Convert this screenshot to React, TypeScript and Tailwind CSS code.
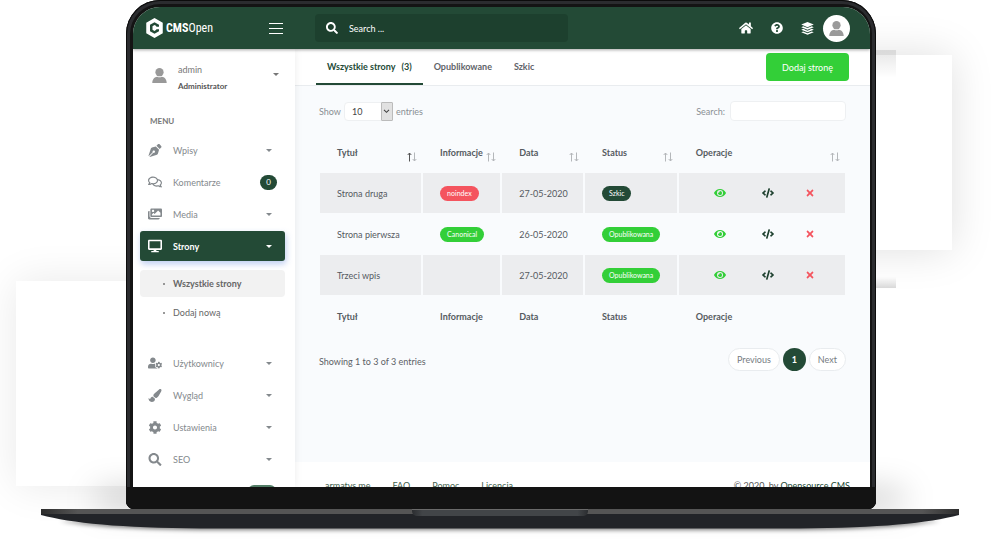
import type { ReactNode } from "react";
import {
  FaCode,
  FaCog,
  FaDesktop,
  FaEye,
  FaHome,
  FaImages,
  FaPaintBrush,
  FaPenNib,
  FaQuestionCircle,
  FaRegComments,
  FaSearch,
  FaTimes,
  FaUserCog,
} from "react-icons/fa";

function Caret() {
  return (
    <svg viewBox="0 0 8 4" className="h-[3px] w-[6px] shrink-0" aria-hidden="true">
      <path d="M0 0h8L4 4z" fill="currentColor" />
    </svg>
  );
}

function Person({ className }: { className: string }) {
  return (
    <svg viewBox="0 0 16 16" className={className} aria-hidden="true">
      <circle cx="8" cy="4.5" r="4.4" fill="currentColor" />
      <path d="M.3 16c0-4.400 2.500-6.400 5.200-6.800 1.500.9 3.500.9 5 0 2.700.4 5.200 2.400 5.200 6.800z" fill="currentColor" />
    </svg>
  );
}

function Layers() {
  return (
    <svg viewBox="0 0 26 26" className="h-[13px] w-[13px]" fill="currentColor" aria-hidden="true">
      <path d="M13 0 25.500 5.200 13 10.400.5 5.200z" />
      <path d="M4.500 8.600 13 12.200l8.500-3.600 4 1.700L13 15.500.5 10.300z" />
      <path d="M4.500 13.700 13 17.300l8.500-3.600 4 1.700L13 20.600.5 15.400z" />
      <path d="M4.500 18.800 13 22.400l8.500-3.600 4 1.700L13 25.700.5 20.500z" />
    </svg>
  );
}

function Logo() {
  return (
    <a href="#home" className="flex items-center gap-[3px] text-white" aria-label="CMSOpen">
      <svg viewBox="0 0 34 40" className="h-5 w-[17px]" aria-hidden="true">
        <path
          fillRule="evenodd"
          fill="currentColor"
          d="M17 0 33.500 9.500v21L17 40 .5 30.500v-21zM17 8.500 8 13.700v12.600l9 5.200 9-5.200v-3.800h-5.500v1.200L17 25.800l-4-2.300v-7l4-2.300 3.500 2v1.300H26v-3.800z"
        />
      </svg>
      <span className="flex font-['Roboto_Condensed','Roboto',sans-serif] text-[12px] leading-5">
        <span className="font-bold">CMS</span>
        <span>Open</span>
      </span>
    </a>
  );
}

function Header() {
  return (
    <header className="relative z-10 flex h-[42px] shrink-0 items-center bg-[#234a36] pr-5 pl-[13px] text-white shadow-[0_1px_3px_rgba(0,0,0,0.35)]">
      <div className="flex w-[169px] shrink-0 items-center justify-between pr-8">
        <Logo />
        <button type="button" aria-label="Toggle menu" className="flex w-3.5 flex-col gap-1">
          <span className="h-px bg-white" />
          <span className="h-px bg-white" />
          <span className="h-px bg-white" />
        </button>
      </div>
      <label className="flex h-7 w-[253px] items-center gap-[11px] rounded-sm bg-[#1d402e] px-[11px]">
        <FaSearch className="h-3 w-3 shrink-0" />
        <input
          type="search"
          aria-label="Search"
          placeholder="Search ..."
          className="min-w-0 flex-1 bg-transparent text-[9px] text-white outline-none placeholder:text-white"
        />
      </label>
      <nav className="ml-auto flex items-center gap-[18px]" aria-label="Shortcuts">
        <a href="#home" aria-label="Home"><FaHome className="h-3.5 w-3.5" /></a>
        <a href="#help" aria-label="Help"><FaQuestionCircle className="h-3 w-3" /></a>
        <a href="#layers" aria-label="Layers"><Layers /></a>
      </nav>
      <button type="button" aria-label="Account" className="ml-[9px] flex h-[27px] w-[27px] items-center justify-center rounded-full bg-white text-[#9a9a9a]">
        <Person className="h-[15px] w-[15px]" />
      </button>
    </header>
  );
}

function MenuItem({ icon, label, badge, active }: { icon: ReactNode; label: string; badge?: string; active?: boolean }) {
  return (
    <a
      href={"#" + label}
      className={
        active
          ? "flex h-[30px] items-center rounded-[3px] bg-[#234a36] px-2 font-bold text-white shadow-[1px_3px_6px_rgba(90,130,220,0.4)]"
          : "flex h-[30px] items-center px-2 text-[#84898d]"
      }
    >
      <span className="flex w-[25px] shrink-0">{icon}</span>
      <span className="flex-1">{label}</span>
      {badge ? (
        <span className="flex h-[15px] w-[17px] items-center justify-center rounded-full bg-[#234a36] text-[8px] text-white">{badge}</span>
      ) : (
        <span className="pr-[5px]"><Caret /></span>
      )}
    </a>
  );
}

function Sidebar() {
  return (
    <aside className="relative z-[5] w-[162px] shrink-0 overflow-hidden bg-white pr-[10px] pl-[7px] shadow-[0_0_8px_rgba(0,0,0,0.08)]">
      <div className="flex h-[56px] items-start pt-[13px] pr-[6px] pl-3">
        <Person className="mt-1.5 h-[15px] w-[15px] text-[#999]" />
        <div className="ml-[11px] flex-1">
          <div className="leading-4 text-[#777]">admin</div>
          <div className="text-[8px] leading-4 font-bold text-[#555]">Administrator</div>
        </div>
        <span className="mt-[11px] text-[#777]"><Caret /></span>
      </div>
      <h2 className="px-[10px] pt-[11px] pb-2 text-[8px] leading-[11px] font-bold text-[#777]">MENU</h2>
      <nav className="flex flex-col gap-0.5" aria-label="Main menu">
        <MenuItem icon={<FaPenNib className="h-[13px] w-[14px]" />} label="Wpisy" />
        <MenuItem icon={<FaRegComments className="h-[14px] w-[14px]" />} label="Komentarze" badge="0" />
        <MenuItem icon={<FaImages className="h-[14px] w-[14px]" />} label="Media" />
        <MenuItem icon={<FaDesktop className="h-[14px] w-[14px]" />} label="Strony" active />
        <ul className="mt-[7px] mb-5 flex flex-col gap-0.5 text-[#666]">
          <li>
            <a href="#all" className="flex h-[27px] items-center rounded-sm bg-[#f2f2f2] pl-[23px] font-bold">
              <span className="mr-2 h-0.5 w-0.5 rounded-full bg-[#777]" />
              Wszystkie strony
            </a>
          </li>
          <li>
            <a href="#add" className="flex h-[27px] items-center pl-[23px]">
              <span className="mr-2 h-0.5 w-0.5 rounded-full bg-[#777]" />
              Dodaj nową
            </a>
          </li>
        </ul>
        <MenuItem icon={<FaUserCog className="h-[14px] w-[14px]" />} label="Użytkownicy" />
        <MenuItem icon={<FaPaintBrush className="h-[13px] w-[14px]" />} label="Wygląd" />
        <MenuItem icon={<FaCog className="h-[13px] w-[14px]" />} label="Ustawienia" />
        <MenuItem icon={<FaSearch className="h-[13px] w-[14px]" />} label="SEO" />
        <div className="flex justify-end pt-[9px] pr-[9px]">
          <span className="h-3 w-7 rounded-full bg-[#527d66]" />
        </div>
      </nav>
    </aside>
  );
}

function SortArrows({ up }: { up?: boolean }) {
  return (
    <svg viewBox="0 0 10 10" className="h-2.5 w-2.5 shrink-0" fill="none" aria-hidden="true">
      <path d="M2.500 9.500V1M.7 3 2.500 1l1.800 2" stroke={up ? "#555" : "#b4b7ba"} />
      <path d="M7.500.5V9M5.700 7 7.500 9l1.800-2" stroke="#b4b7ba" />
    </svg>
  );
}

const columns = ["Tytuł", "Informacje", "Data", "Status", "Operacje"];

const rows = [
  { title: "Strona druga", info: "noindex", date: "27-05-2020", status: "Szkic" },
  { title: "Strona pierwsza", info: "Canonical", date: "26-05-2020", status: "Opublikowana" },
  { title: "Trzeci wpis", info: "", date: "27-05-2020", status: "Opublikowana" },
];

const tagColors: Record<string, string> = {
  noindex: "bg-[#f4545e]",
  Canonical: "bg-[#33cf38]",
  Szkic: "bg-[#234a36]",
  Opublikowana: "bg-[#33cf38]",
};

function Tag({ text }: { text: string }) {
  return (
    <span className={"flex h-[15px] w-fit items-center rounded-full px-[7px] text-[7px] text-white " + tagColors[text]}>
      {text}
    </span>
  );
}

function PagesTable() {
  return (
    <table className="mt-[10px] w-full table-fixed border-separate border-spacing-px text-left text-[#555a5f]">
      <colgroup>
        <col className="w-[19.600%]" />
        <col className="w-[15%]" />
        <col className="w-[15.700%]" />
        <col className="w-[17.800%]" />
        <col />
      </colgroup>
      <thead>
        <tr>
          {columns.map((name, i) => (
            <th key={name} scope="col" className="h-10 p-0 pr-[5px] pl-[17px] font-bold">
              <span className="flex h-5 items-end justify-between">
                <span className="pb-0.5">{name}</span>
                <SortArrows up={i === 0} />
              </span>
            </th>
          ))}
        </tr>
      </thead>
      <tbody>
        {rows.map((row, i) => (
          <tr
            key={row.title}
            className={
              i % 2 === 0
                ? "h-10 [&>td]:border-r [&>td]:border-[#f9fbfd] [&>td]:bg-[#ecedef] [&>td]:p-0 [&>td]:pl-[17px] [&>td:last-child]:border-r-0"
                : "h-10 [&>td]:p-0 [&>td]:pl-[17px]"
            }
          >
            <td>{row.title}</td>
            <td>{row.info && <Tag text={row.info} />}</td>
            <td>{row.date}</td>
            <td><Tag text={row.status} /></td>
            <td>
              <span className="flex items-center pl-[18px]">
                <button type="button" aria-label="Podgląd" className="flex w-12 text-[#33cf38]"><FaEye className="h-3 w-3" /></button>
                <button type="button" aria-label="Kod" className="flex w-[43px] text-[#1d402e]"><FaCode className="h-3 w-3" /></button>
                <button type="button" aria-label="Usuń" className="flex text-[#f4545e]"><FaTimes className="h-2.5 w-2.5" /></button>
              </span>
            </td>
          </tr>
        ))}
      </tbody>
      <tfoot>
        <tr>
          {columns.map((name) => (
            <th key={name} scope="col" className="h-10 p-0 pl-[17px] font-bold">{name}</th>
          ))}
        </tr>
      </tfoot>
    </table>
  );
}

function Main() {
  return (
    <main className="flex min-w-0 flex-1 flex-col bg-[#f9fbfd]">
      <div className="flex h-[37px] shrink-0 items-start justify-between border-b border-[#e9ecef] bg-white px-[21px]">
        <nav className="flex h-9 font-bold text-[#5f6469]" aria-label="Pages">
          <a href="#all" className="flex items-center gap-1.5 border-b-2 border-[#234a36] px-[11px] text-[#234a36]">
            <span>Wszystkie strony</span>
            <span>(3)</span>
          </a>
          <a href="#published" className="flex items-center border-b-2 border-transparent px-[11px]">Opublikowane</a>
          <a href="#draft" className="flex items-center border-b-2 border-transparent px-[11px]">Szkic</a>
        </nav>
        <button type="button" className="mt-1 h-7 rounded-sm bg-[#33cf38] px-4 text-white">Dodaj stronę</button>
      </div>
      <section className="h-[376px] shrink-0 px-6 pt-[15px]">
        <div className="flex items-center justify-between text-[#8a8f94]">
          <label className="flex items-center gap-[3px]">
            Show
            <span className="relative flex">
              <select className="h-[19px] w-[49px] appearance-none rounded-sm border border-[#eef0f2] bg-white pl-[7px] text-[9px] text-[#444]" defaultValue="10">
                <option>10</option>
                <option>25</option>
              </select>
              <span className="pointer-events-none absolute top-0 right-0 flex h-[19px] w-3 items-center justify-center rounded-[1px] border border-[#bbb] bg-[#e1e1e1] text-[#444]">
                <svg viewBox="0 0 8 6" className="h-[5px] w-[7px]" fill="none" aria-hidden="true">
                  <path d="M1 1l3 3 3-3" stroke="currentColor" strokeWidth="1.300" />
                </svg>
              </span>
            </span>
            entries
          </label>
          <label className="flex items-center gap-[5px]">
            Search:
            <input type="search" className="h-5 w-[116px] rounded-sm border border-[#eef0f2] bg-white px-1 text-[9px] outline-none" />
          </label>
        </div>
        <PagesTable />
        <div className="mt-[11px] flex items-center justify-between text-[#5c6166]">
          <p className="pt-1">Showing 1 to 3 of 3 entries</p>
          <nav className="flex gap-[3px] text-[#777c82]" aria-label="Pagination">
            <button type="button" className="h-[23px] rounded-full border border-[#e9ecef] bg-white px-2">Previous</button>
            <button type="button" className="h-[23px] w-[23px] rounded-full bg-[#234a36] font-bold text-white">1</button>
            <button type="button" className="h-[23px] rounded-full border border-[#e9ecef] bg-white px-2">Next</button>
          </nav>
        </div>
      </section>
      <footer className="flex shrink-0 grow items-start justify-between bg-white px-5 pt-4 pb-4 pl-[30px] text-[#3f5f4e]">
        <nav className="flex gap-[22px]" aria-label="Footer">
          <a href="#author">armatys.me</a>
          <a href="#faq">FAQ</a>
          <a href="#help">Pomoc</a>
          <a href="#license">Licencja</a>
        </nav>
        <p className="text-[#555]">© 2020, by <a href="#cms" className="text-[#234a36]">Opensource CMS</a></p>
      </footer>
    </main>
  );
}

function LaptopBase() {
  return (
    <svg viewBox="0 0 920 30" preserveAspectRatio="none" className="relative h-[30px] w-full shrink-0" aria-hidden="true">
      <defs>
        <linearGradient id="edge" x1="0" x2="1" y1="0" y2="0">
          <stop offset="0" stopColor="#2c2c2c" />
          <stop offset="0.040" stopColor="#555" />
          <stop offset="0.960" stopColor="#555" />
          <stop offset="1" stopColor="#2c2c2c" />
        </linearGradient>
        <linearGradient id="notch" x1="0" x2="1" y1="0" y2="0">
          <stop offset="0" stopColor="#2b2d30" />
          <stop offset="0.060" stopColor="#424548" />
          <stop offset="0.940" stopColor="#424548" />
          <stop offset="1" stopColor="#2b2d30" />
        </linearGradient>
        <filter id="soft" x="-5%" y="-100%" width="110%" height="300%">
          <feGaussianBlur stdDeviation="2" />
        </filter>
      </defs>
      <path d="M20 12h880c-30 5-70 8-140 9H160c-70-1-110-4-140-9z" fill="#000" opacity="0.500" filter="url(#soft)" />
      <path d="M1 4h918v2c-30 8-80 13-160 13.500H161C81 19 31 14 1 6z" fill="#222428" />
      <path d="M1 0h918v5H1z" fill="url(#edge)" />
      <path d="M372 0h176v2c0 3-2 5-6 5H378c-4 0-6-2-6-5z" fill="url(#notch)" />
      <path d="M372 0h176v1H372z" fill="#6a6a6a" />
    </svg>
  );
}

export default function App() {
  return (
    <div className="relative flex h-screen flex-col overflow-hidden bg-white px-10 font-['Lato',sans-serif] text-[9px] leading-[15px]">
      <div className="absolute top-[55px] right-12 h-[195px] w-40 bg-white shadow-[0_0_40px_rgba(0,0,0,0.13)]" />
      <div className="absolute top-[281px] left-4 h-[205px] w-40 bg-white shadow-[0_0_40px_rgba(0,0,0,0.09)]" />
      <div className="absolute top-[50px] right-[104px] h-7 w-8 bg-gradient-to-b from-black/10 to-transparent" />
      <div className="absolute top-[277px] right-[104px] h-[11px] w-8 bg-gradient-to-t from-black/15 to-transparent" />
      <div className="absolute right-24 bottom-8 left-24 h-4 rounded-full bg-black/25 blur-lg" />
      <div className="relative mr-[84px] ml-[86px] flex min-h-0 flex-1 flex-col rounded-t-[34px] rounded-b-lg bg-[#141414] pt-[7px] pr-1.5 pl-[7px] shadow-[inset_0_0_0_1px_#0c0c0c,inset_0_0_0_4px_#2b2c2f]">
        <div className="flex min-h-0 flex-1 flex-col overflow-hidden rounded-t-[27px] bg-white">
          <Header />
          <div className="flex min-h-0 flex-1">
            <Sidebar />
            <Main />
          </div>
        </div>
        <div className="-mr-1.5 -ml-[7px] h-[22px] shrink-0 rounded-b-lg bg-[#131313]" />
      </div>
      <LaptopBase />
    </div>
  );
}
